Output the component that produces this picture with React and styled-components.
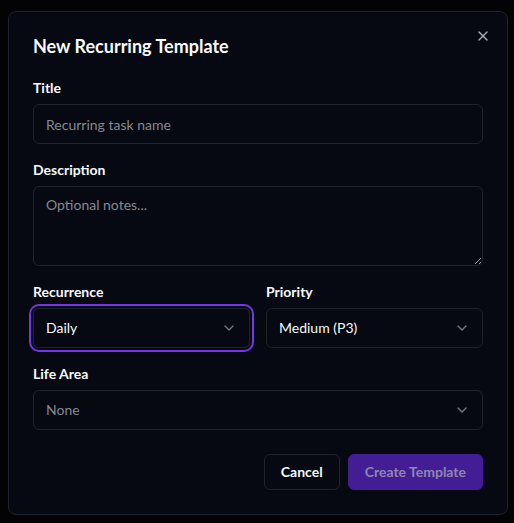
import React from 'react';
import styled, { createGlobalStyle } from 'styled-components';
import { ChevronDown, X } from 'lucide-react';

const FONT = `Lato, Inter, "Liberation Sans", sans-serif`;

const GlobalStyle = createGlobalStyle`
  * { box-sizing: border-box; }
  html, body {
    margin: 0;
    padding: 0;
    background: #030305;
    color-scheme: dark;
  }
  body {
    font-family: ${FONT};
    color: #f8fafc;
  }
`;

const Page = styled.div`
  min-height: 523px;
  padding: 11px 7px 0 8px;
`;

const Dialog = styled.div`
  position: relative;
  width: 500px;
  padding: 24px;
  background: #060911;
  border: 1px solid #1e2230;
  border-radius: 8px;
  display: flex;
  flex-direction: column;
`;

const Heading = styled.h2`
  margin: 1px 0 21px;
  font-size: 18px;
  line-height: 1;
  font-weight: 700;
`;

const CloseButton = styled.button`
  position: absolute;
  top: 16px;
  right: 16px;
  width: 16px;
  height: 16px;
  padding: 0;
  border: 0;
  background: none;
  color: #e2e8f0;
  opacity: 0.75;
  display: flex;
  cursor: pointer;
`;

const Form = styled.form`
  display: flex;
  flex-direction: column;
  gap: 14px;
`;

const Field = styled.div`
  display: flex;
  flex-direction: column;
  gap: 6px;
  min-width: 0;
`;

const Label = styled.label`
  padding-top: 2px;
  font-size: 14px;
  line-height: 20px;
  font-weight: 700;
  color: #f8fafc;
`;

const Row = styled.div`
  display: grid;
  grid-template-columns: 1fr 1fr;
  gap: 16px;
`;

const TextInput = styled.input`
  height: 40px;
  width: 100%;
  padding: 0 12px;
  border: 1px solid #1e2330;
  border-radius: 6px;
  background: transparent;
  color: #f8fafc;
  font: 400 14px/20px ${FONT};
  outline: none;
  &::placeholder { color: #858891; }
`;

const TextArea = styled.textarea`
  height: 80px;
  width: 100%;
  padding: 8px 12px;
  border: 1px solid #1e2330;
  border-radius: 6px;
  background: transparent;
  color: #f8fafc;
  font: 400 14px/20px ${FONT};
  outline: none;
  resize: vertical;
  &::placeholder { color: #858891; }
`;

const SelectBox = styled.button`
  height: 40px;
  width: 100%;
  padding: 0 12px;
  display: flex;
  align-items: center;
  justify-content: space-between;
  border: 1px solid #1e2330;
  border-radius: 6px;
  background: transparent;
  color: ${p => (p.$muted ? '#858891' : '#f8fafc')};
  font: 400 14px/20px ${FONT};
  text-align: left;
  cursor: pointer;
  box-shadow: ${p => (p.$focused ? '0 0 0 2px #060911, 0 0 0 4px #7436e6' : 'none')};

  svg { opacity: 0.5; color: #e2e8f0; flex-shrink: 0; }
`;

const Footer = styled.div`
  display: flex;
  justify-content: flex-end;
  gap: 8px;
  margin-top: 24px;
`;

const Button = styled.button`
  height: 36px;
  padding: 0 16px;
  border-radius: 6px;
  font: 700 14px/20px ${FONT};
  cursor: pointer;
  border: 1px solid ${p => (p.$primary ? '#431d93' : '#1e2330')};
  background: ${p => (p.$primary ? '#431d93' : '#060911')};
  color: ${p => (p.$primary ? '#8f86b0' : '#f8fafc')};
`;

const Select = ({ value, muted, focused }) => (
  <SelectBox type="button" $muted={muted} $focused={focused}>
    <span>{value}</span>
    <ChevronDown size={16} strokeWidth={2} />
  </SelectBox>
);

export default function App() {
  return (
    <Page>
      <GlobalStyle />
      <Dialog>
        <Heading>New Recurring Template</Heading>
        <CloseButton type="button" aria-label="Close">
          <X size={16} strokeWidth={2} />
        </CloseButton>
        <Form onSubmit={e => e.preventDefault()}>
          <Field>
            <Label>Title</Label>
            <TextInput placeholder="Recurring task name" />
          </Field>
          <Field>
            <Label>Description</Label>
            <TextArea placeholder="Optional notes..." />
          </Field>
          <Row>
            <Field>
              <Label>Recurrence</Label>
              <Select value="Daily" focused />
            </Field>
            <Field>
              <Label>Priority</Label>
              <Select value="Medium (P3)" />
            </Field>
          </Row>
          <Field>
            <Label>Life Area</Label>
            <Select value="None" muted />
          </Field>
        </Form>
        <Footer>
          <Button type="button">Cancel</Button>
          <Button type="button" $primary disabled>Create Template</Button>
        </Footer>
      </Dialog>
    </Page>
  );
}
